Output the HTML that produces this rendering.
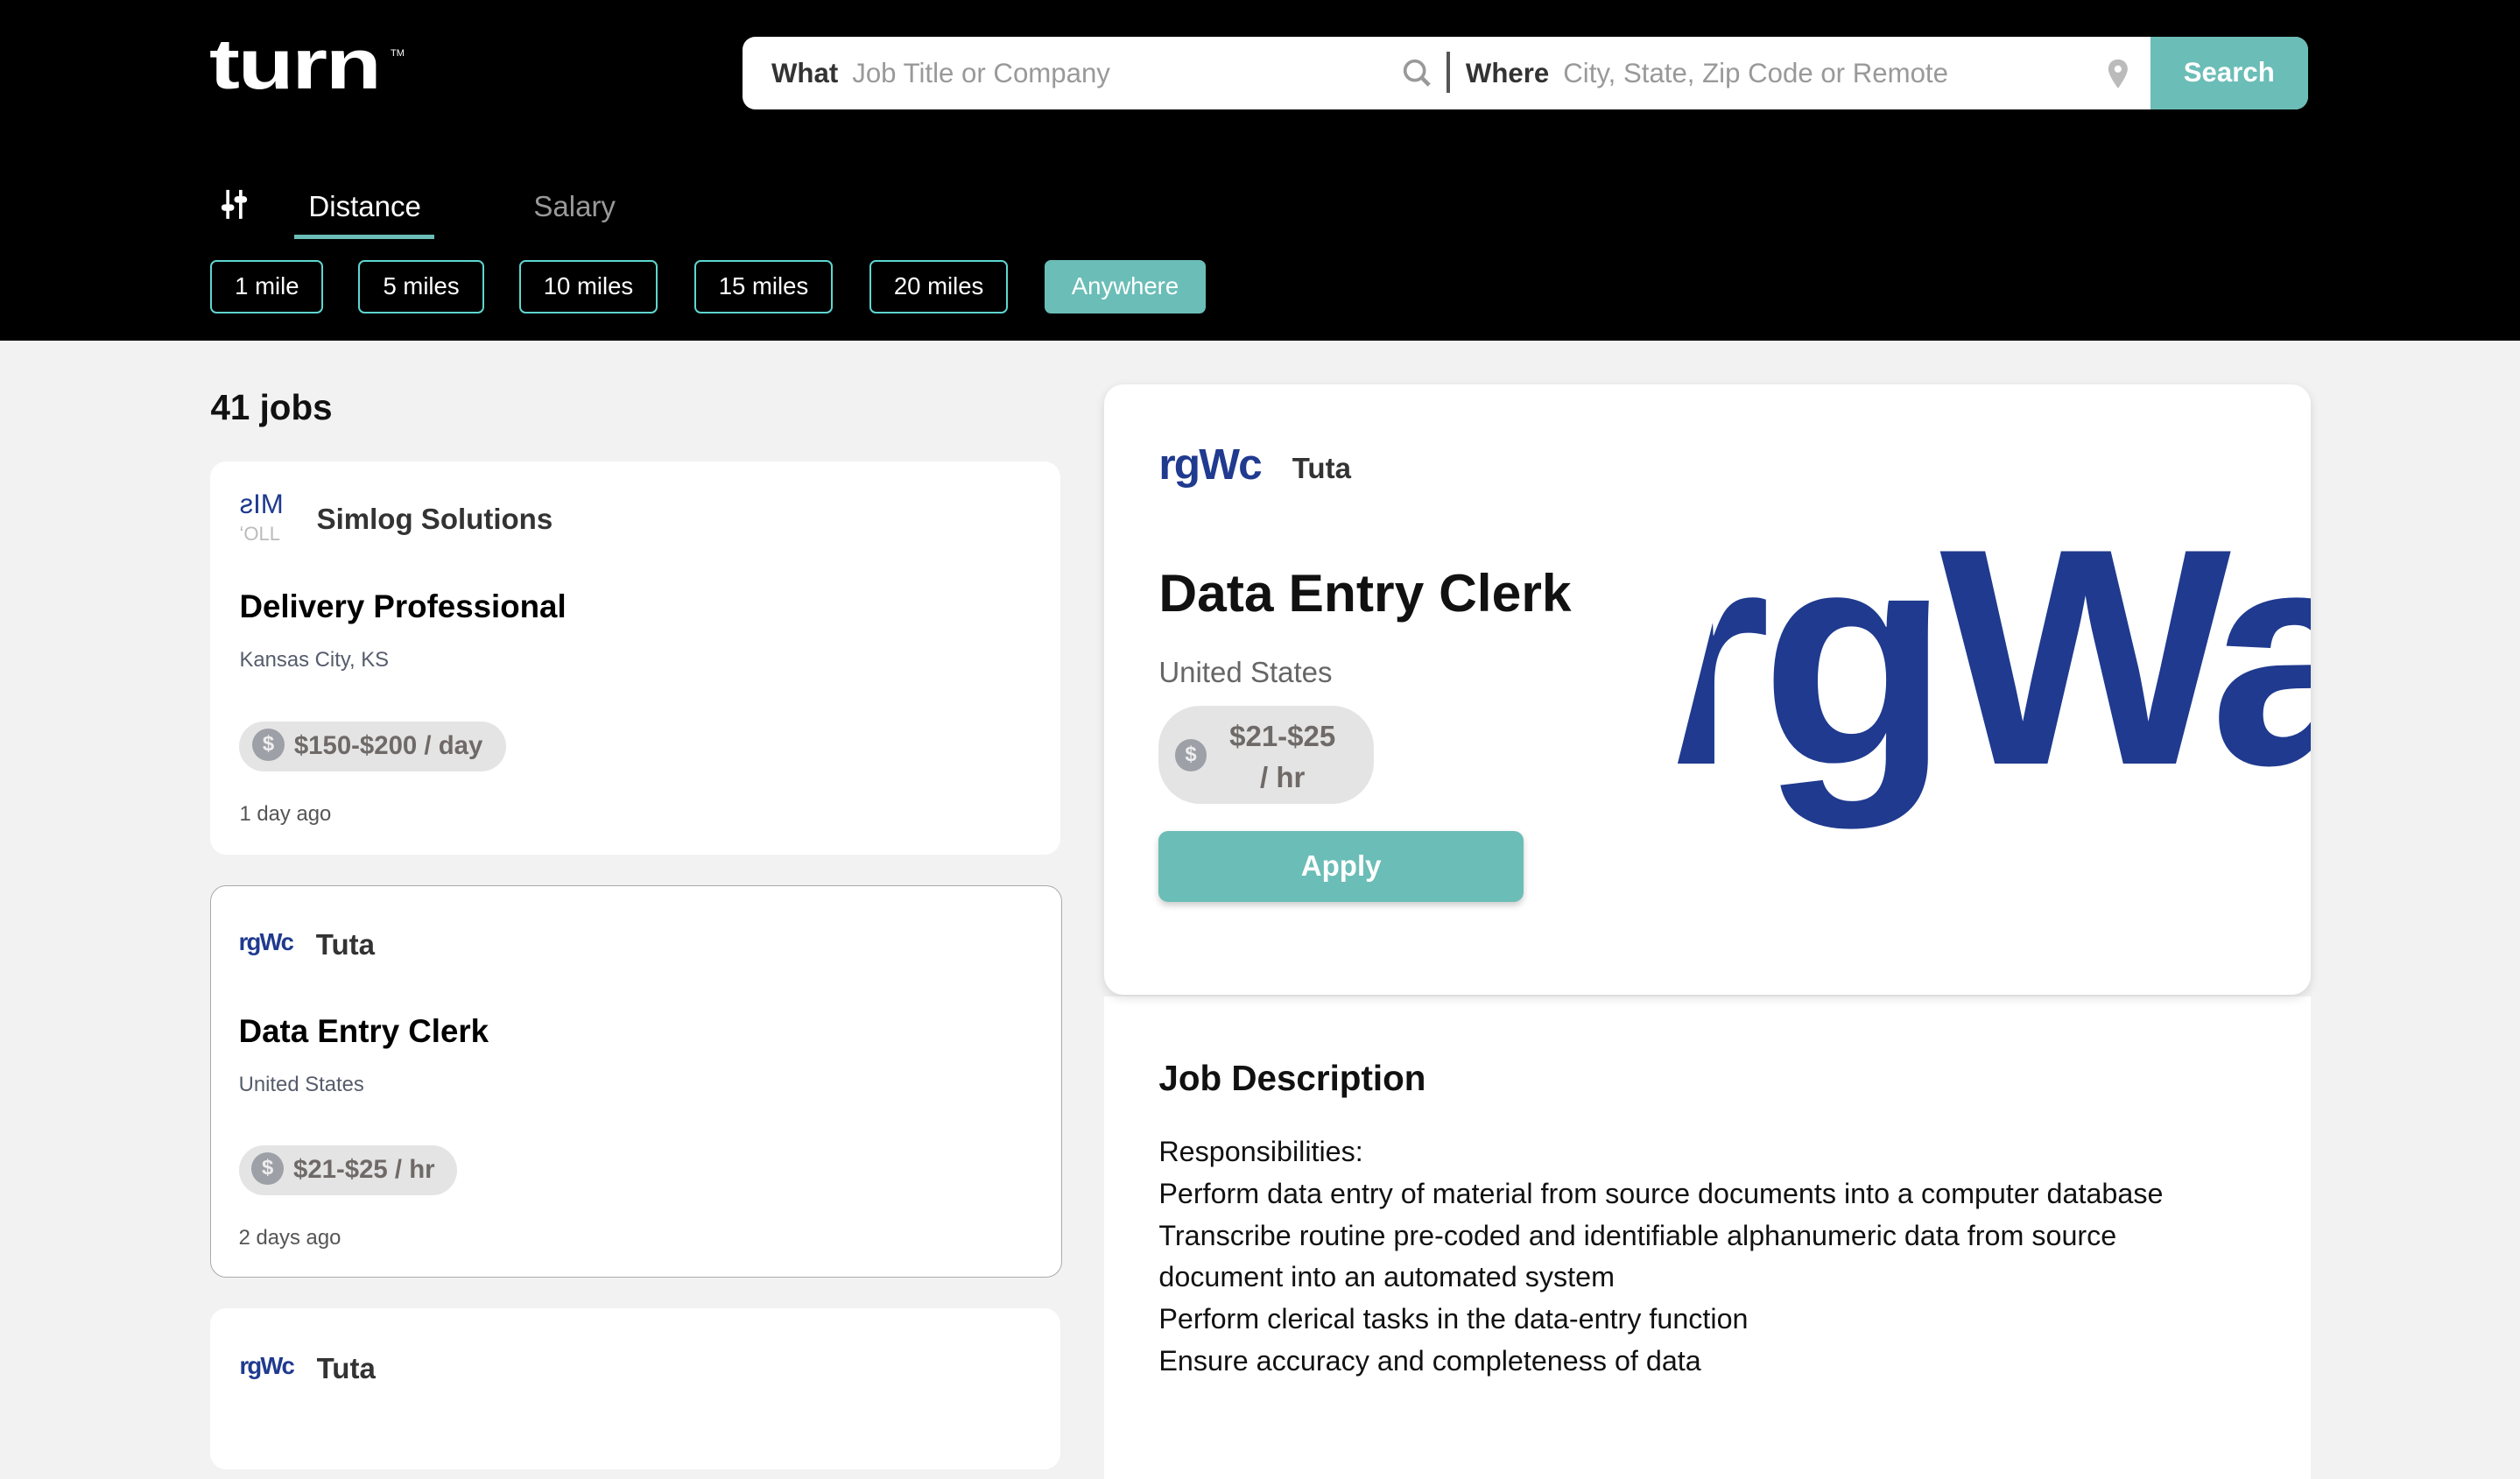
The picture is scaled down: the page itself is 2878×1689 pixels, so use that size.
<!DOCTYPE html>
<html><head><meta charset="utf-8"><style>
html,body{margin:0;padding:0;}
body{width:1568px;height:887px;zoom:1.83546;background:#f2f2f2;font-family:"Liberation Sans",sans-serif;overflow:hidden;position:relative;}
.a{position:absolute;}
.hdr{left:0;top:0;width:1568px;height:212px;background:#000;}
.chip{top:162px;height:31px;border:1.5px solid #5fd6d0;border-radius:4px;color:#fff;font-size:15px;line-height:31px;text-align:center;box-sizing:content-box;}
.card{left:131px;width:529px;background:#fff;border-radius:10px;}
.pill{background:#e4e4e4;border-radius:16px;height:31px;color:#6f6a68;font-weight:bold;font-size:16px;line-height:31px;}
.dol{display:inline-block;width:20px;height:20px;border-radius:50%;background:#9ea0a8;color:#eee;font-size:13px;line-height:20px;text-align:center;vertical-align:middle;margin:0 6px 3px 8px;}
.lg{color:#1f3a8f;font-weight:900;letter-spacing:-1px;}
</style></head><body>
<div class="a hdr"></div>
<div class="a" style="left:130px;top:16px;color:#fff;font-size:44px;font-weight:bold;letter-spacing:-1px;line-height:50px;transform:scaleX(1.3);transform-origin:left;">turn</div>
<div class="a" style="left:243px;top:30px;color:#fff;font-size:6px;">TM</div>
<div class="a" style="left:462px;top:23px;width:974px;height:45px;background:#fff;border-radius:8px;overflow:hidden;">
 <div class="a" style="left:18px;top:13px;font-size:17px;color:#333;"><b>What</b> <span style="color:#999;margin-left:4px">Job Title or Company</span></div>
 <svg class="a" style="left:410px;top:13px" width="20" height="20" viewBox="0 0 20 20"><circle cx="8" cy="8" r="6" fill="none" stroke="#999" stroke-width="2"/><path d="M12.5 12.5L17 17" stroke="#999" stroke-width="2.5"/></svg>
 <div class="a" style="left:438px;top:9px;width:2px;height:26px;background:#555"></div>
 <div class="a" style="left:450px;top:13px;font-size:17px;color:#333;"><b>Where</b> <span style="color:#999;margin-left:4px">City, State, Zip Code or Remote</span></div>
 <svg class="a" style="left:849px;top:13px" width="14" height="20" viewBox="0 0 14 20"><path d="M7 1C3.5 1 1 3.5 1 7c0 4 6 12 6 12s6-8 6-12c0-3.5-2.5-6-6-6z" fill="#bbb"/><circle cx="7" cy="7" r="2.2" fill="#fff"/></svg>
 <div class="a" style="left:876px;top:0;width:98px;height:45px;background:#6bbdb7;color:#fff;font-weight:bold;font-size:17px;line-height:45px;text-align:center;">Search</div>
</div>
<svg class="a" style="left:137px;top:117px" width="18" height="20" viewBox="0 0 18 20"><path d="M5 1v18M13 1v18" stroke="#fff" stroke-width="2"/><rect x="1" y="10" width="8" height="4" rx="2" fill="#fff"/><rect x="9" y="5" width="8" height="4" rx="2" fill="#fff"/></svg>
<div class="a" style="left:192px;top:118px;color:#fff;font-size:18px;">Distance</div>
<div class="a" style="left:183px;top:146px;width:87px;height:3px;background:#6bbdb7"></div>
<div class="a" style="left:332px;top:118px;color:#999;font-size:18px;">Salary</div>
<div class="a chip" style="left:131px;width:68px">1 mile</div>
<div class="a chip" style="left:223px;width:76px">5 miles</div>
<div class="a chip" style="left:323px;width:84px">10 miles</div>
<div class="a chip" style="left:432px;width:84px">15 miles</div>
<div class="a chip" style="left:541px;width:84px">20 miles</div>
<div class="a chip" style="left:650px;width:98px;background:#6bbdb7;border-color:#6bbdb7">Anywhere</div>

<div class="a" style="left:131px;top:241px;font-size:22px;font-weight:bold;color:#111">41 jobs</div>

<div class="a card" style="top:287px;height:245px">
 <div class="a" style="left:18px;top:18px;color:#1f3a8f;font-size:17px;line-height:17px">ƨIM<br><span style="color:#bbb;font-size:12px">ʻOLL</span></div>
 <div class="a" style="left:66px;top:26px;font-size:18px;font-weight:bold;color:#333">Simlog Solutions</div>
 <div class="a" style="left:18px;top:79px;font-size:20px;font-weight:bold;color:#000">Delivery Professional</div>
 <div class="a" style="left:18px;top:116px;font-size:13px;color:#555c6b">Kansas City, KS</div>
 <div class="a pill" style="left:18px;top:162px;width:166px"><span class="dol">$</span>$150-$200 / day</div>
 <div class="a" style="left:18px;top:212px;font-size:13px;color:#555">1 day ago</div>
</div>
<div class="a card" style="top:551px;height:243px;border:1px solid #aaa">
 <div class="a lg" style="left:17px;top:26px;font-size:15px">rgWc</div>
 <div class="a" style="left:65px;top:26px;font-size:18px;font-weight:bold;color:#333">Tuta</div>
 <div class="a" style="left:17px;top:79px;font-size:20px;font-weight:bold;color:#000">Data Entry Clerk</div>
 <div class="a" style="left:17px;top:116px;font-size:13px;color:#555c6b">United States</div>
 <div class="a pill" style="left:17px;top:161px;width:136px"><span class="dol">$</span>$21-$25 / hr</div>
 <div class="a" style="left:17px;top:211px;font-size:13px;color:#555">2 days ago</div>
</div>
<div class="a card" style="top:814px;height:100px">
 <div class="a lg" style="left:18px;top:27px;font-size:15px">rgWc</div>
 <div class="a" style="left:66px;top:27px;font-size:18px;font-weight:bold;color:#333">Tuta</div>
</div>

<div class="a" style="left:687px;top:620px;width:751px;height:300px;background:#fff"></div>
<div class="a" style="left:687px;top:239px;width:751px;height:380px;background:#fff;border-radius:12px;box-shadow:0 2px 6px rgba(0,0,0,.12);overflow:hidden">
 <div class="a lg" style="left:34px;top:34px;font-size:27px">rgWc</div>
 <div class="a" style="left:117px;top:42px;font-size:18px;font-weight:bold;color:#333">Tuta</div>
 <div class="a" style="left:34px;top:111px;font-size:33px;font-weight:bold;color:#111">Data Entry Clerk</div>
 <div class="a" style="left:34px;top:169px;font-size:18px;color:#666">United States</div>
 <div class="a" style="left:34px;top:200px;width:134px;height:61px;background:#e4e4e4;border-radius:26px;color:#6f6a68;font-weight:bold;font-size:18px;">
  <span class="dol a" style="left:10px;top:21px;margin:0">$</span>
  <div class="a" style="left:44px;top:6px;text-align:center;line-height:26px">$21-$25<br>/ hr</div></div>
 <div class="a" style="left:34px;top:278px;width:227px;height:44px;background:#6bbdb7;border-radius:6px;color:#fff;font-weight:bold;font-size:18px;line-height:44px;text-align:center;box-shadow:0 2px 4px rgba(0,0,0,.2)">Apply</div>
 <div class="a lg" style="left:340px;top:70px;font-size:192px;line-height:200px;letter-spacing:-6px">rgWa</div>
 <div class="a" style="left:330px;top:90px;width:38px;height:200px;background:#fff;transform:skewX(-14deg)"></div>
</div>
<div class="a" style="left:721px;top:658px;font-size:22px;font-weight:bold;color:#111">Job Description</div>
<div class="a" style="left:721px;top:704px;font-size:17.6px;line-height:26px;color:#111">Responsibilities:<br>Perform data entry of material from source documents into a computer database<br>Transcribe routine pre-coded and identifiable alphanumeric data from source<br>document into an automated system<br>Perform clerical tasks in the data-entry function<br>Ensure accuracy and completeness of data</div>
</body></html>
